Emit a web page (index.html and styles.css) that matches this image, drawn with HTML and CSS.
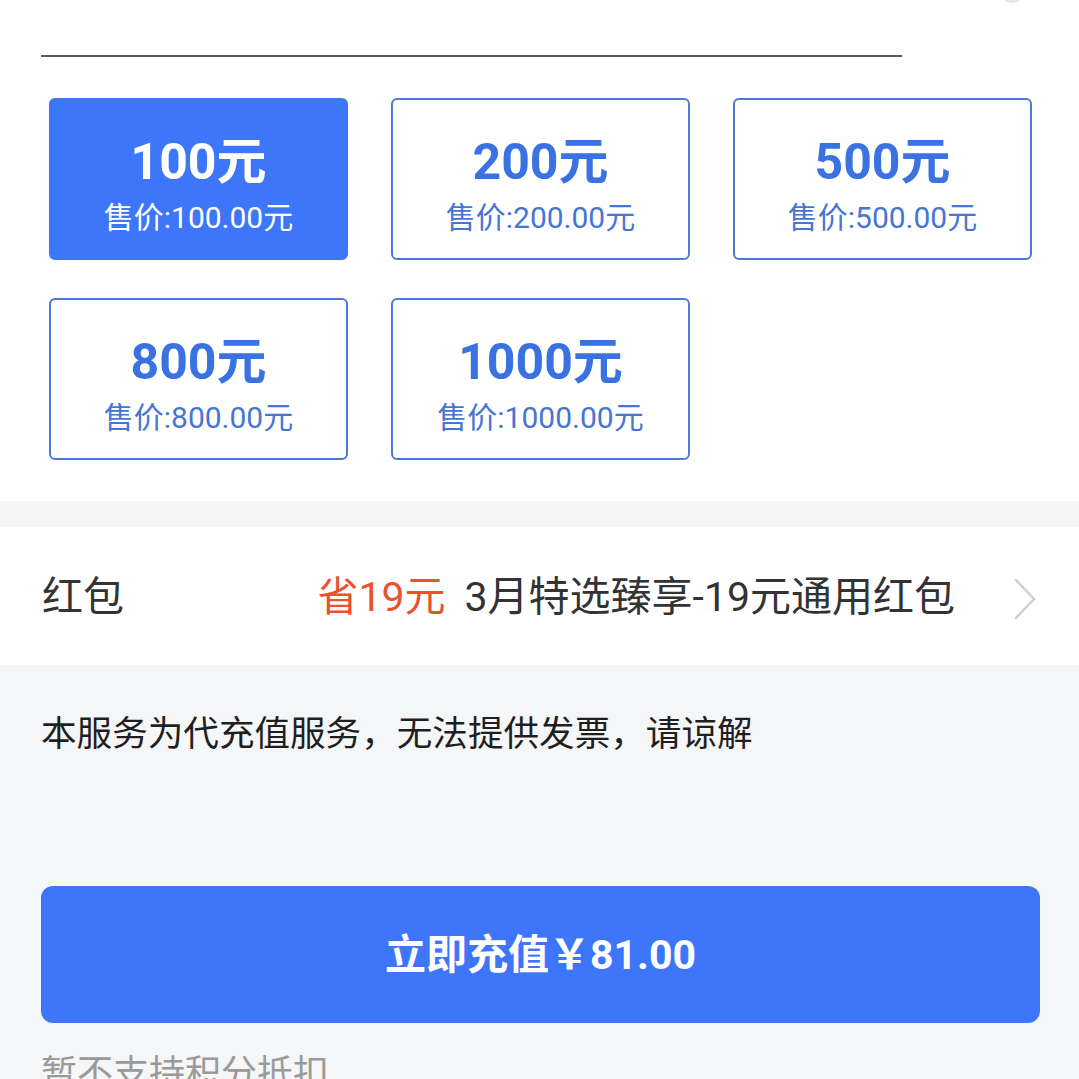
FILE: index.html
```html
<!doctype html>
<html>
<head>
  <meta charset="utf-8">
  <meta content="width=device-width,minimum-scale=1" name="viewport">
  <link rel="stylesheet" href="styles.css">
</head>
<body>
  <div class="topPanel">
    <div class="inputRow">
      <div class="inputLine"></div>
      <span class="clearIcon"></span>
    </div>

    <!-- opções de valor -->
    <div class="cardGrid">
      <div class="card selected"><p class="amount">100元</p><p class="price">售价:100.00元</p></div>
      <div class="card"><p class="amount">200元</p><p class="price">售价:200.00元</p></div>
      <div class="card"><p class="amount">500元</p><p class="price">售价:500.00元</p></div>
      <div class="card"><p class="amount">800元</p><p class="price">售价:800.00元</p></div>
      <div class="card"><p class="amount">1000元</p><p class="price">售价:1000.00元</p></div>
    </div>
  </div>

  <div class="band"></div>

  <div class="packetRow">
    <span class="packetLabel">红包</span>
    <span class="save">省19元</span>
    <span class="packetInfo">3月特选臻享-19元通用红包</span>
    <svg class="chevron" width="24" height="44" viewBox="0 0 24 44">
      <polyline points="2,2 21,22 2,42" fill="none" stroke="#cfcfcf" stroke-width="2.5"/>
    </svg>
  </div>

  <div class="bottomPanel">
    <p class="notice">本服务为代充值服务，无法提供发票，请谅解</p>
    <button class="payBtn">立即充值￥81.00</button>
    <p class="tip">暂不支持积分抵扣</p>
  </div>
</body>
</html>
```

FILE: styles.css
```css
body {
  margin: 0;
  background-color: #f5f6f7;
  font-family: Roboto, "Noto Sans CJK SC", sans-serif;
  height: 1079px;
  overflow: hidden;
}
p {
  margin: 0;
}
/* parte branca de cima */
.topPanel {
  background-color: #ffffff;
  padding-bottom: 41px;
}
.inputRow {
  display: flex;
  align-items: flex-start;
  height: 58px;
}
.inputLine {
  width: 861px;
  height: 55px;
  margin-left: 41px;
  border-bottom: 2px solid #5a5a5a;
}
.clearIcon {
  width: 24px;
  height: 24px;
  margin-left: 98px;
  margin-top: -21px;
  border-radius: 50%;
  background-color: #e6e6e6;
}
.cardGrid {
  display: grid;
  grid-template-columns: repeat(3, 299px);
  column-gap: 43px;
  row-gap: 38px;
  padding: 40px 0 0 49px;
}
.card {
  box-sizing: border-box;
  height: 162px;
  border: 2px solid #4a7ad6;
  border-radius: 6px;
  padding-top: 33px;
  text-align: center;
  color: #3a72e2;
}
.card.selected {
  background-color: #3e76f9;
  border-color: #3e76f9;
  color: #ffffff;
}
.amount {
  font-size: 50px;
  font-weight: bold;
  line-height: 58px;
}
.price {
  font-size: 30px;
  line-height: 36px;
  margin-top: 9px;
  color: #4676d4;
}
.selected .price {
  color: #ffffff;
}
.band {
  height: 26px;
  background-color: #f5f5f5;
}
/* Linha do red packet */
.packetRow {
  display: flex;
  align-items: center;
  height: 138px;
  padding: 0 42px 6px 42px;
  box-sizing: border-box;
  background-color: #ffffff;
  font-size: 41px;
  color: #333333;
}
.packetLabel {
  flex: 1;
}
.save {
  color: #e8532e;
  margin-right: 19px;
}
.chevron {
  margin-left: 58px;
  margin-top: 12px;
}
.bottomPanel {
  padding: 0 39px 0 41px;
}
.notice {
  font-size: 35.6px;
  line-height: 50px;
  padding-top: 44px;
  color: #1f1f1f;
}
.payBtn {
  display: block;
  width: 100%;
  height: 137px;
  margin-top: 127px;
  padding-bottom: 8px;
  border: none;
  border-radius: 12px;
  background-color: #3e76fb;
  color: #ffffff;
  font-family: Roboto, "Noto Sans CJK SC", sans-serif;
  font-size: 41px;
  font-weight: bold;
}
.tip {
  margin-top: 26px;
  font-size: 36px;
  line-height: 50px;
  color: #9a9a9a;
}
```
